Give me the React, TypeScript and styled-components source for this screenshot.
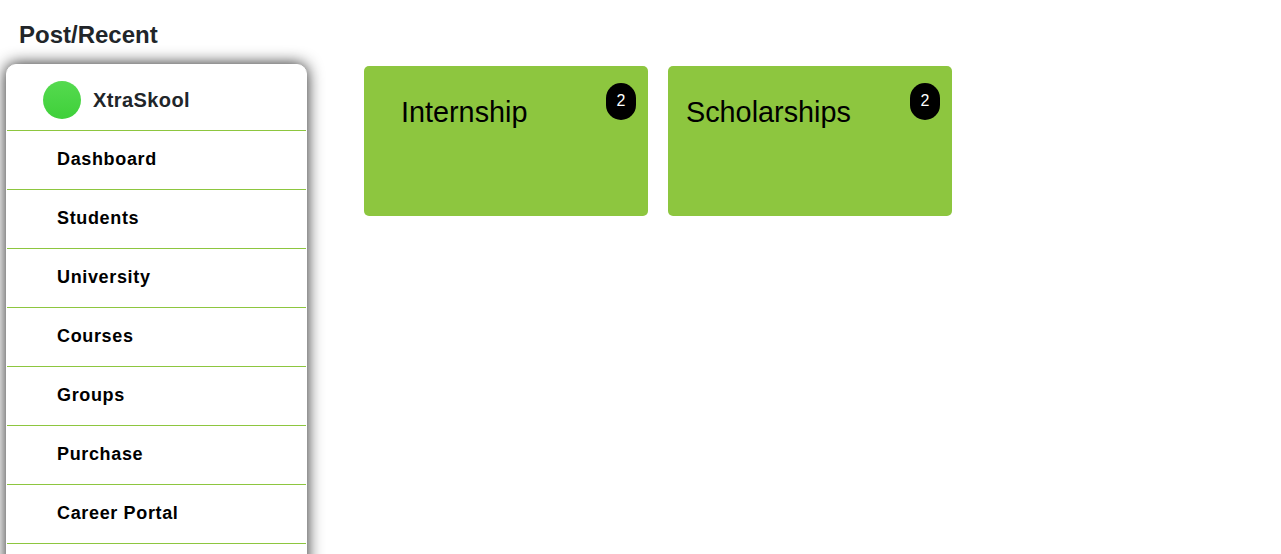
import React from "react";
import styled, { createGlobalStyle } from "styled-components";

const Global = createGlobalStyle`
  html, body { margin: 0; padding: 0; height: 100%; overflow: hidden; background: #fff; }
  body { font-family: "Liberation Sans", Arial, sans-serif; color: #212529; }
  * { box-sizing: border-box; }
`;

const Page = styled.div`
  height: 554px;
  overflow: hidden;
  display: flex;
  flex-direction: column;
`;

const Title = styled.h1`
  margin: 0;
  flex: none;
  padding: 21px 0 0 19px;
  height: 64px;
  font-size: 24px;
  line-height: 28px;
  font-weight: 700;
  color: #212529;
`;

const Body = styled.div`
  flex: none;
  display: flex;
  align-items: flex-start;
  padding-left: 6px;
`;

const Sidebar = styled.nav`
  width: 301px;
  flex: none;
  background: #fff;
  border: 1px solid #fff;
  border-radius: 10px;
  box-shadow: 0 0 16px rgba(0, 0, 0, 0.88);
  height: 560px;
  overflow: hidden;
`;

const Brand = styled.div`
  display: flex;
  align-items: center;
  gap: 12px;
  height: 66px;
  padding: 4px 0 0 36px;
  border-bottom: 1px solid #8dc63f;
`;

const Logo = styled.span`
  width: 38px;
  height: 38px;
  border-radius: 50%;
  background: linear-gradient(180deg, #55da4f, #3fd03a);
  flex: none;
`;

const BrandName = styled.span`
  padding-top: 2px;
  font-size: 20px;
  font-weight: 700;
  letter-spacing: 0.4px;
  color: #212529;
`;

const MenuItem = styled.a`
  display: flex;
  align-items: center;
  height: 59px;
  padding: 0 0 2px 50px;
  font-size: 18px;
  font-weight: 700;
  letter-spacing: 0.65px;
  color: #000;
  border-bottom: 1px solid #8dc63f;
`;

const Cards = styled.div`
  display: flex;
  gap: 20px;
  margin-left: 57px;
  margin-top: 2px;
`;

const Card = styled.div<{ $pad: number }>`
  position: relative;
  width: 284px;
  height: 150px;
  background: #8dc63f;
  border-radius: 5px;
  padding: 28px 0 0 ${(p) => p.$pad}px;
  font-size: 28.8px;
  line-height: 37px;
  color: #000;
`;

const Badge = styled.span`
  position: absolute;
  top: 17px;
  right: 12px;
  width: 30px;
  height: 37px;
  padding-bottom: 2px;
  border-radius: 15px;
  background: #000;
  color: #fff;
  font-size: 16px;
  display: flex;
  align-items: center;
  justify-content: center;
`;

const items = ["Dashboard", "Students", "University", "Courses", "Groups", "Purchase", "Career Portal"];

export default function App() {
  return (
    <Page>
      <Global />
      <Title>Post/Recent</Title>
      <Body>
        <Sidebar>
          <Brand>
            <Logo />
            <BrandName>XtraSkool</BrandName>
          </Brand>
          {items.map((i) => (
            <MenuItem key={i}>{i}</MenuItem>
          ))}
        </Sidebar>
        <Cards>
          <Card $pad={37}>
            Internship
            <Badge>2</Badge>
          </Card>
          <Card $pad={18}>
            Scholarships
            <Badge>2</Badge>
          </Card>
        </Cards>
      </Body>
    </Page>
  );
}
